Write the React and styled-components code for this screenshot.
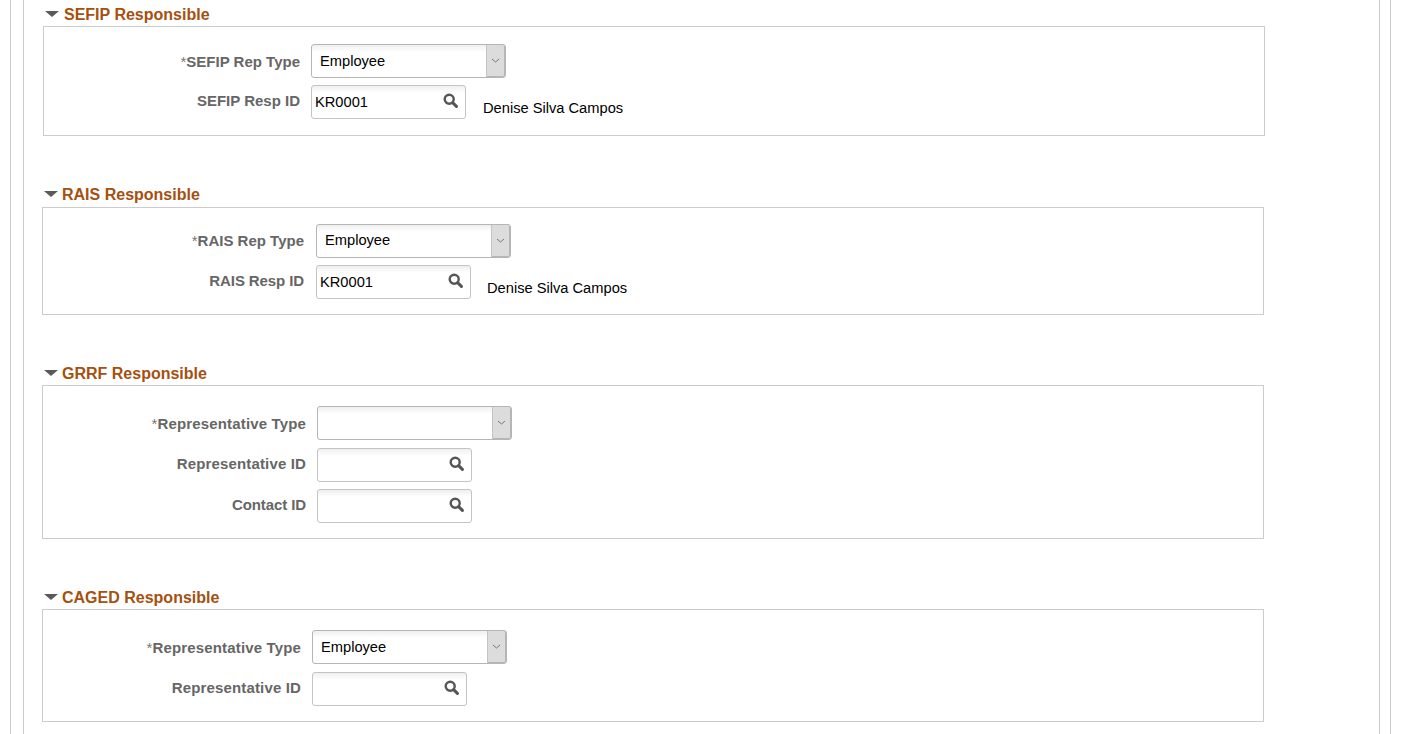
import React from 'react';
import styled, { createGlobalStyle } from 'styled-components';

const Global = createGlobalStyle`
  html, body { margin: 0; padding: 0; background: #fff; overflow: hidden; }
  body { font-family: "Liberation Sans", Arial, sans-serif; }
`;

const Outer = styled.div`
  box-sizing: border-box;
  width: 1381px;
  height: 734px;
  margin-left: 10px;
  padding: 0 10px 0 12px;
  border-left: 1px solid #ccc;
  border-right: 1px solid #ccc;
  overflow: hidden;
`;

const Inner = styled.div`
  box-sizing: border-box;
  height: 100%;
  padding-top: 5px;
  border-left: 1px solid #ccc;
  border-right: 1px solid #ccc;
`;

const Section = styled.section`
  margin-top: ${p => p.$top}px;
  margin-left: ${p => p.$left}px;
  width: 1222px;
`;

const Heading = styled.h2`
  box-sizing: border-box;
  display: flex;
  align-items: center;
  height: 21px;
  margin: 0 0 0 2px;
  padding-bottom: ${p => p.$lift}px;
  font-size: 16px;
  font-weight: bold;
  color: #a5500f;
`;

const Caret = styled.span`
  width: 0;
  height: 0;
  margin: -2px ${p => p.$gap}px 0 0;
  border-left: 7px solid transparent;
  border-right: 7px solid transparent;
  border-top: 6px solid #5a5a5a;
`;

const Box = styled.div`
  box-sizing: border-box;
  height: ${p => p.$height}px;
  padding-top: ${p => p.$pad}px;
  border: 1px solid #ccc;
  display: flex;
  flex-direction: column;
`;

const Row = styled.div`
  display: flex;
  align-items: center;
  height: 34px;
  margin-bottom: ${p => p.$gap}px;
`;

const Label = styled.label`
  width: ${p => p.$width}px;
  margin: ${p => p.$nudge}px ${p => p.$gap}px 0 0;
  text-align: right;
  font-size: 15px;
  font-weight: bold;
  letter-spacing: ${p => p.$track}px;
  color: #666;
  flex: none;
`;

const Required = styled.span`
  font-weight: normal;
  color: #777;
`;

const Field = styled.div`
  box-sizing: border-box;
  position: relative;
  display: flex;
  align-items: center;
  height: 34px;
  border: 1px solid #bbb;
  border-radius: 3px;
  background: linear-gradient(#efefef 0, #fff 7px);
  font-size: 14.67px;
  color: #000;
  flex: none;
`;

const SelectField = styled(Field)`
  width: 195px;
  padding: 0 0 ${p => p.$valueLift}px 8px;
  border-color: #b5b5b5;
`;

const SelectArrow = styled.span`
  position: absolute;
  top: 0;
  right: 0;
  bottom: 0;
  width: 17px;
  display: flex;
  align-items: center;
  justify-content: center;
  background: #dcdcdc;
  border-left: 1px solid #c4c4c4;
  border-right: 1px solid #b5b5b5;
  border-bottom: 1px solid #b5b5b5;
  border-radius: 0 2px 2px 0;
`;

const InputField = styled(Field)`
  width: 155px;
  padding: 0 0 1px 3px;
  border-color: #c4c4c4;
`;

const SearchButton = styled.svg`
  position: absolute;
  right: 7px;
  top: 7px;
`;

const Name = styled.span`
  margin-left: ${p => p.$gap}px;
  padding-top: 12px;
  font-size: 14.67px;
  color: #000;
`;

const Search = () => (
  <SearchButton width="15" height="15" viewBox="0 0 15 15" aria-hidden="true">
    <circle cx="6.2" cy="6.2" r="4.5" fill="none" stroke="#555" strokeWidth="2.4" />
    <path d="M9.6 9.6 L13.4 13.4" stroke="#555" strokeWidth="3" strokeLinecap="round" />
  </SearchButton>
);

const Chevron = () => (
  <svg width="9" height="5" viewBox="0 0 9 5" aria-hidden="true">
    <path d="M1 1 L4.5 4 L8 1" fill="none" stroke="#777" strokeWidth="1" />
  </svg>
);

const Select = ({ value, lift }) => (
  <SelectField $valueLift={lift}>
    {value}
    <SelectArrow><Chevron /></SelectArrow>
  </SelectField>
);

const Input = ({ value }) => (
  <InputField>
    {value}
    <Search />
  </InputField>
);

const sections = [
  {
    title: 'SEFIP Responsible', top: 0, left: 19, caretGap: 5, lift: 2, height: 110, pad: 17, labelW: 256, labelGap: 11, nameGap: 17,
    rows: [
      { label: 'SEFIP Rep Type', required: true, select: 'Employee', gap: 7, nudge: 1, lift: 1 },
      { label: 'SEFIP Resp ID', input: 'KR0001', name: 'Denise Silva Campos', nudge: -3 },
    ],
  },
  {
    title: 'RAIS Responsible', top: 50, left: 18, caretGap: 4, lift: 4, height: 108, pad: 16, labelW: 261, labelGap: 12, nameGap: 16,
    rows: [
      { label: 'RAIS Rep Type', required: true, select: 'Employee', gap: 7, nudge: -1, lift: 3 },
      { label: 'RAIS Resp ID', input: 'KR0001', name: 'Denise Silva Campos', nudge: -3, track: -0.1 },
    ],
  },
  {
    title: 'GRRF Responsible', top: 49, left: 18, caretGap: 4, lift: 2, height: 154, pad: 20, labelW: 263, labelGap: 11, nameGap: 17,
    rows: [
      { label: 'Representative Type', required: true, select: '', gap: 8, nudge: 1, track: 0.15, lift: 1 },
      { label: 'Representative ID', input: '', gap: 7, nudge: -3, track: 0.15 },
      { label: 'Contact ID', input: '', nudge: -3, track: -0.1 },
    ],
  },
  {
    title: 'CAGED Responsible', top: 49, left: 18, caretGap: 4, lift: 2, height: 113, pad: 20, labelW: 258, labelGap: 11, nameGap: 17,
    rows: [
      { label: 'Representative Type', required: true, select: 'Employee', gap: 8, nudge: 1, track: 0.15, lift: 1 },
      { label: 'Representative ID', input: '', nudge: -3, track: 0.15 },
    ],
  },
];

export default function App() {
  return (
    <Outer>
      <Global />
      <Inner>
        {sections.map(s => (
          <Section key={s.title} $top={s.top} $left={s.left}>
            <Heading $lift={s.lift}>
              <Caret $gap={s.caretGap} />
              {s.title}
            </Heading>
            <Box $height={s.height} $pad={s.pad}>
              {s.rows.map(r => (
                <Row key={r.label} $gap={r.gap || 0}>
                  <Label $width={s.labelW} $gap={s.labelGap} $nudge={r.nudge} $track={r.track || 0}>
                    {r.required && <Required>*</Required>}
                    {r.label}
                  </Label>
                  {r.select !== undefined ? <Select value={r.select} lift={r.lift} /> : <Input value={r.input} />}
                  {r.name && <Name $gap={s.nameGap}>{r.name}</Name>}
                </Row>
              ))}
            </Box>
          </Section>
        ))}
      </Inner>
    </Outer>
  );
}
